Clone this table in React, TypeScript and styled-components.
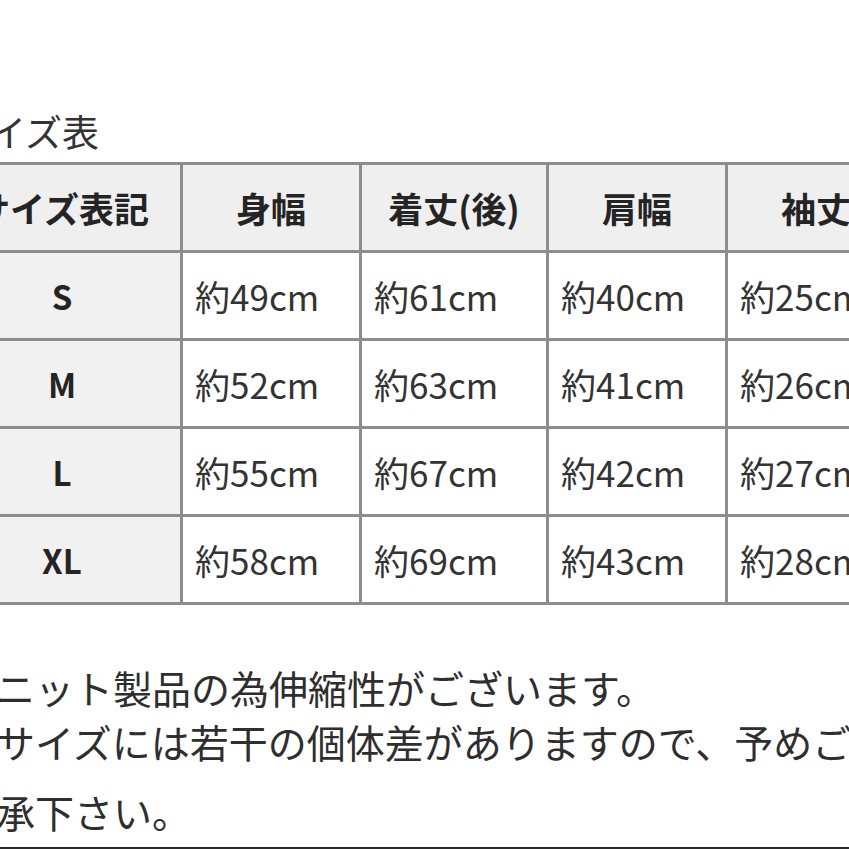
import React from "react";
import styled, { createGlobalStyle } from "styled-components";

const GlobalStyle = createGlobalStyle`
  html, body {
    margin: 0;
    padding: 0;
    background: #ffffff;
    overflow: hidden;
  }
  body {
    font-family: "Noto Sans CJK JP", "Noto Sans", sans-serif;
    color: #2b2b2b;
  }
`;

const Page = styled.div`
  box-sizing: border-box;
  width: 849px;
  height: 849px;
  overflow: hidden;
  padding-top: 110px;
  border-bottom: 2px solid #2a2a2a;
`;

const Title = styled.h2`
  margin: 0 0 10px -48px;
  height: 42px;
  font-size: 37px;
  line-height: 42px;
  font-weight: 400;
  color: #333333;
  white-space: nowrap;
`;

const Grid = styled.div`
  display: grid;
  grid-template-columns: 236px 176px 184px 176px 176px;
  grid-auto-rows: 85px;
  gap: 3px;
  padding: 3px;
  width: max-content;
  margin-left: -59px;
  background: #8d8d8d;
`;

const Cell = styled.div`
  display: flex;
  align-items: center;
  font-size: 35px;
  white-space: nowrap;
`;

const HeadCell = styled(Cell)`
  justify-content: center;
  background: #efefef;
  font-weight: 700;
  color: #242424;
`;

const SizeCell = styled(HeadCell)`
  background: #f1f1f1;
  font-size: 33px;
`;

const ValueCell = styled(Cell)`
  background: #ffffff;
  padding-left: 12px;
  color: #333333;
`;

const Notes = styled.div`
  margin: 57px 0 0 -4px;
  font-size: 39px;
  color: #2e2e2e;
  white-space: nowrap;
`;

const NoteLine = styled.div<{ $gap: number }>`
  height: 50px;
  line-height: 50px;
  margin-top: ${(p) => p.$gap}px;
`;

const headers = ["サイズ表記", "身幅", "着丈(後)", "肩幅", "袖丈"];

const rows: { size: string; values: number[] }[] = [
  { size: "S", values: [49, 61, 40, 25] },
  { size: "M", values: [52, 63, 41, 26] },
  { size: "L", values: [55, 67, 42, 27] },
  { size: "XL", values: [58, 69, 43, 28] },
];

export default function App() {
  return (
    <>
      <GlobalStyle />
      <Page>
        <Title>サイズ表</Title>
        <Grid>
          {headers.map((h) => (
            <HeadCell key={h}>{h}</HeadCell>
          ))}
          {rows.map((r) => (
            <React.Fragment key={r.size}>
              <SizeCell>{r.size}</SizeCell>
              {r.values.map((v, i) => (
                <ValueCell key={i}>約{v}cm</ValueCell>
              ))}
            </React.Fragment>
          ))}
        </Grid>
        <Notes>
          <NoteLine $gap={0}>ニット製品の為伸縮性がございます。</NoteLine>
          <NoteLine $gap={4}>サイズには若干の個体差がありますので、予めご了</NoteLine>
          <NoteLine $gap={20}>承下さい。</NoteLine>
        </Notes>
      </Page>
    </>
  );
}
